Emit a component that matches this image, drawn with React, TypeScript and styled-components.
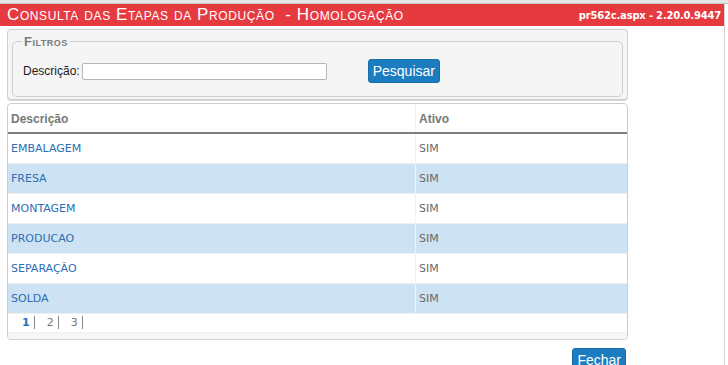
import React from "react";
import styled, { createGlobalStyle } from "styled-components";

const etapas = [
  { nome: "EMBALAGEM", ativo: "SIM" },
  { nome: "FRESA", ativo: "SIM" },
  { nome: "MONTAGEM", ativo: "SIM" },
  { nome: "PRODUCAO", ativo: "SIM" },
  { nome: "SEPARAÇÃO", ativo: "SIM" },
  { nome: "SOLDA", ativo: "SIM" },
];

export default function App() {
  return (
    <>
      <GlobalStyle />
      <TopStrip />
      <Page>
        <TitleBar>
          <Title>Consulta das Etapas da Produção&nbsp; - Homologação</Title>
          <Version>pr562c.aspx - 2.20.0.9447</Version>
        </TitleBar>
        <Content>
          <FilterPanel>
            <Fieldset>
              <Legend>Filtros</Legend>
              <FilterRow>
                <Label>Descrição:</Label>
                <Input type="text" />
                <BlueButton $left={41}>Pesquisar</BlueButton>
              </FilterRow>
            </Fieldset>
          </FilterPanel>
          <GridPanel>
            <Table>
              <thead>
                <tr>
                  <Th style={{ width: 401 }}>Descrição</Th>
                  <Th>Ativo</Th>
                </tr>
              </thead>
              <tbody>
                {etapas.map((e, i) => (
                  <Row key={e.nome} $alt={i % 2 === 1}>
                    <NameCell>{e.nome}</NameCell>
                    <Cell>{e.ativo}</Cell>
                  </Row>
                ))}
                <PagerRow>
                  <td colSpan={2}>
                    <Pager>
                      <Page1>1</Page1>
                      <Sep />
                      <PageN>2</PageN>
                      <Sep />
                      <PageN>3</PageN>
                      <Sep />
                    </Pager>
                  </td>
                </PagerRow>
              </tbody>
            </Table>
            <GridFooter />
          </GridPanel>
          <Actions>
            <BlueButton $left={0}>Fechar</BlueButton>
          </Actions>
        </Content>
      </Page>
    </>
  );
}

const GlobalStyle = createGlobalStyle`
  body {
    margin: 0;
    background: #fff;
    font-family: "Liberation Sans", Arial, sans-serif;
    overflow: hidden;
  }
`;

const TopStrip = styled.div`
  height: 3px;
  background: #e6e6e6;
  border-bottom: 1px solid #c9c9c9;
`;

const Page = styled.div`
  width: 724px;
  height: 361px;
  border-right: 1px solid #d4d4d4;
`;

const TitleBar = styled.div`
  height: 22px;
  background: #e63a41;
  display: flex;
  align-items: center;
  justify-content: space-between;
  padding: 0 3px 0 7px;
  color: #fff;
`;

const Title = styled.div`
  font-family: "Liberation Sans", Arial, sans-serif;
  font-variant: small-caps;
  font-size: 17px;
  letter-spacing: 0.6px;
  line-height: 22px;
`;

const Version = styled.div`
  font-family: "DejaVu Sans", Verdana, sans-serif;
  font-weight: bold;
  font-size: 10px;
  letter-spacing: -0.2px;
`;

const Content = styled.div`
  padding: 3px 0 0 7px;
  width: 621px;
`;

const FilterPanel = styled.div`
  background: #f5f5f5;
  border: 1px solid #d0d0d0;
  border-radius: 4px;
  padding: 4px 4px 2px 4px;
  box-shadow: 0 1px 0 #d6d6d6;
`;

const Fieldset = styled.fieldset`
  margin: 0;
  border: 1px solid #cfcfcf;
  border-radius: 5px;
  padding: 6px 10px 12px 10px;
  height: 63px;
  box-sizing: border-box;
`;

const Legend = styled.legend`
  padding: 0 2px;
  margin-left: -1px;
  font-variant: small-caps;
  font-weight: bold;
  font-size: 13px;
  color: #7a7a7a;
  letter-spacing: 0.5px;
`;

const FilterRow = styled.div`
  display: flex;
  align-items: center;
  margin-top: 4px;
`;

const Label = styled.span`
  font-size: 12px;
  color: #222;
  margin-right: 2px;
`;

const Input = styled.input`
  width: 245px;
  height: 17px;
  box-sizing: border-box;
  border: 1px solid #b5b5b5;
  border-radius: 2px;
  background: #fff;
  padding: 0 3px;
`;

const BlueButton = styled.button<{ $left: number }>`
  margin-left: ${(p) => p.$left}px;
  height: 24px;
  padding: 0 4px;
  background: #1b7cc0;
  border: 1px solid #176ea9;
  border-radius: 3px;
  color: #fff;
  font-family: "Liberation Sans", Arial, sans-serif;
  font-size: 14px;
  cursor: pointer;
`;

const GridPanel = styled.div`
  margin-top: 3px;
  border: 1px solid #cdcdcd;
  border-radius: 4px;
  overflow: hidden;
  background: #fff;
`;

const Table = styled.table`
  width: 100%;
  border-collapse: collapse;
  font-family: "DejaVu Sans", Verdana, sans-serif;
  font-size: 11px;
`;

const Th = styled.th`
  height: 26px;
  text-align: left;
  padding: 2px 3px 0 3px;
  font-family: "Liberation Sans", Arial, sans-serif;
  font-size: 12px;
  font-weight: bold;
  color: #787878;
  border-bottom: 2px solid #7d7d7d;
  border-left: 1px solid #f0f0f0;
  &:first-child {
    border-left: none;
  }
`;

const Row = styled.tr<{ $alt: boolean }>`
  height: 30px;
  background: ${(p) => (p.$alt ? "#cde3f3" : "#fff")};
  border-bottom: 1px solid #efefef;
`;

const Cell = styled.td`
  padding: 0 3px;
  color: #6a6a6a;
  border-left: 1px solid #f2f2f2;
`;

const NameCell = styled.td`
  padding: 0 3px;
  color: #2c6eb3;
`;

const PagerRow = styled.tr`
  height: 19px;
`;

const Pager = styled.div`
  display: flex;
  align-items: center;
  padding-left: 13px;
  font-size: 11px;
`;

const Page1 = styled.span`
  font-weight: bold;
  color: #2c6eb3;
`;

const PageN = styled.span`
  color: #777;
`;

const Sep = styled.span`
  width: 1px;
  height: 13px;
  background: #888;
  margin: 0 12px 0 4px;
`;

const GridFooter = styled.div`
  height: 6px;
  background: #f7f7f7;
  border-top: 1px solid #f0f0f0;
`;

const Actions = styled.div`
  display: flex;
  justify-content: flex-end;
  padding-right: 2px;
  margin-top: 8px;
`;
